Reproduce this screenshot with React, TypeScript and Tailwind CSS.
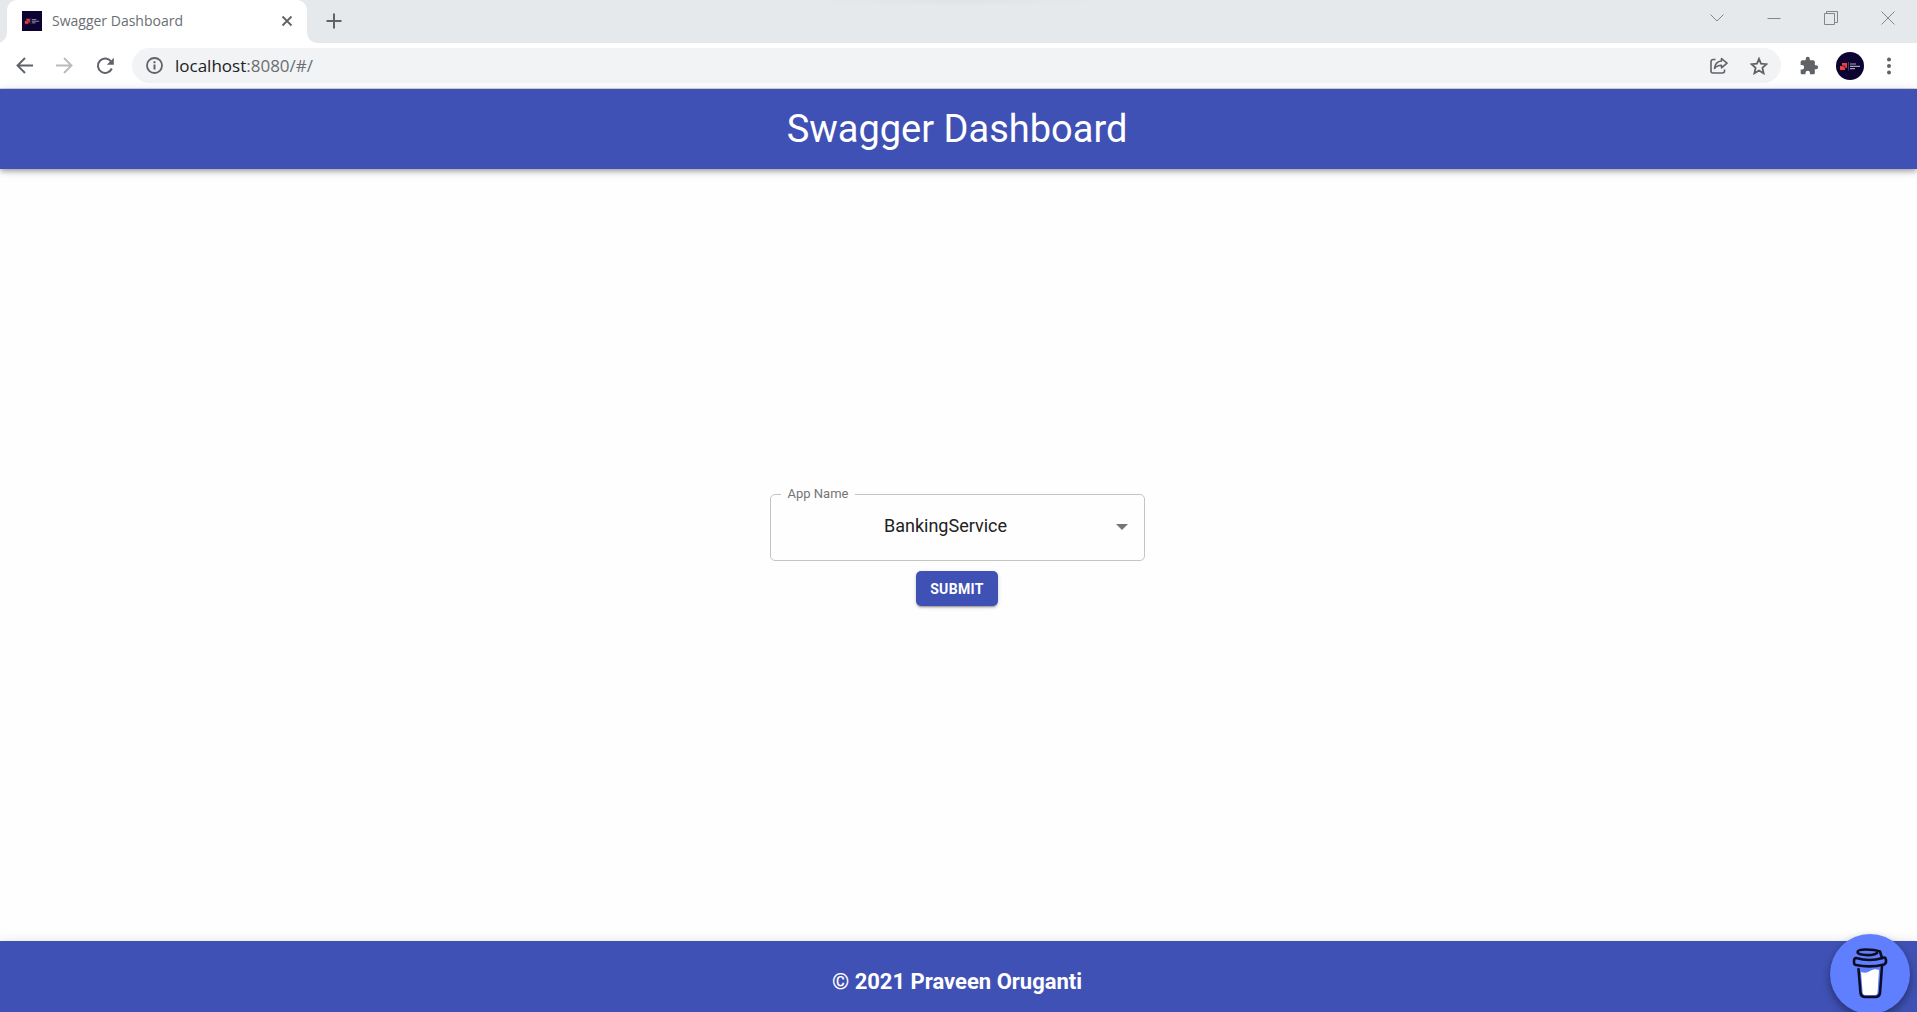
import { useState } from "react";
import type { ReactNode } from "react";

function IconButton({ label, className = "", children }: { label: string; className?: string; children: ReactNode }) {
  return (
    <button type="button" aria-label={label} className={`flex shrink-0 items-center justify-center ${className}`}>
      {children}
    </button>
  );
}

function BrandMark({ className }: { className: string }) {
  return (
    <svg viewBox="0 0 28 28" className={className} aria-hidden="true">
      <rect width="28" height="28" fill="#0c0333" />
      <path d="M6 11h5v5H9v2H4v-4h2z" fill="#e8413f" />
      <path d="M6 14h3v2" fill="none" stroke="#0c0333" strokeWidth=".6" />
      <path d="M12.500 10v8.500" stroke="#6b6685" strokeWidth=".6" />
      <path d="M14 12h6M14 14.300h10M14 16.600h5" stroke="#a5a2b8" strokeWidth="1.200" />
    </svg>
  );
}

function TabStrip() {
  return (
    <div className="flex h-[43px] bg-[#e5e9ec] bg-[radial-gradient(150px_6px_at_50%_0,#dfe3e6,transparent)]">
      <svg viewBox="0 0 7 10" className="h-2.5 w-[7px] shrink-0 self-end" aria-hidden="true">
        <path d="M7 0v10H0V9.500Q6 8 7 0z" fill="#fff" />
      </svg>
      <div className="flex w-[300px] shrink-0 items-center rounded-t-[10px] bg-white pb-0.5 pl-[15px] pr-3">
        <BrandMark className="h-5 w-5" />
        <span className="ml-2.5 flex-1 text-sm text-[#6a6e73]">Swagger Dashboard</span>
        <IconButton label="Close tab" className="h-4 w-4">
          <svg viewBox="0 0 16 16" className="h-4 w-4" aria-hidden="true">
            <path d="M3.500 3.500l9 9M12.500 3.500l-9 9" stroke="#5f6368" strokeWidth="1.800" />
          </svg>
        </IconButton>
      </div>
      <svg viewBox="0 0 10 10" className="h-2.5 w-2.5 shrink-0 self-end" aria-hidden="true">
        <path d="M0 0v10h10Q1 9 0 0z" fill="#fff" />
      </svg>
      <IconButton label="New tab" className="ml-[7px] h-[42px] w-5">
        <svg viewBox="0 0 16 16" className="h-4 w-4" aria-hidden="true">
          <path d="M8 .5v15M.5 8h15" stroke="#5f6368" strokeWidth="2" />
        </svg>
      </IconButton>
      <div className="ml-auto flex h-9 items-center pr-px text-[#83878b]">
        <IconButton label="Search tabs" className="w-[57px]">
          <svg viewBox="0 0 14 14" className="h-3.5 w-3.5" fill="none" stroke="currentColor" aria-hidden="true">
            <path d="M.5 3.500l6.500 6.500 6.500-6.500" />
          </svg>
        </IconButton>
        <IconButton label="Minimize" className="w-[57px]">
          <svg viewBox="0 0 14 14" className="h-3.5 w-3.5" fill="none" stroke="currentColor" aria-hidden="true">
            <path d="M.5 7.500h13" />
          </svg>
        </IconButton>
        <IconButton label="Restore" className="w-[57px]">
          <svg viewBox="0 0 14 14" className="h-3.5 w-3.5" fill="none" stroke="currentColor" aria-hidden="true">
            <path d="M.5 2.500h10v11h-10zM2.500 2.500v-2h11v11h-3" />
          </svg>
        </IconButton>
        <IconButton label="Close" className="w-[57px]">
          <svg viewBox="0 0 14 14" className="h-3.5 w-3.5" fill="none" stroke="currentColor" aria-hidden="true">
            <path d="M.5.5l13 13M13.500.5l-13 13" />
          </svg>
        </IconButton>
      </div>
    </div>
  );
}

function Toolbar() {
  return (
    <div className="flex h-[46px] items-center border-b border-[#d5d7d9] bg-white pl-4 pr-[26px] text-[#5f6368]">
      <IconButton label="Back" className="h-5 w-[17px]">
        <svg viewBox="0 0 17 17" className="h-[17px] w-[17px]" fill="none" stroke="currentColor" strokeWidth="1.900" aria-hidden="true">
          <path d="M17 8.500H1.500M9 1L1.500 8.500 9 16" />
        </svg>
      </IconButton>
      <IconButton label="Forward" className="ml-[23px] h-5 w-[17px] text-[#b9bbbe]">
        <svg viewBox="0 0 17 17" className="h-[17px] w-[17px]" fill="none" stroke="currentColor" strokeWidth="1.900" aria-hidden="true">
          <path d="M0 8.500h15.500M8 1l7.500 7.500L8 16" />
        </svg>
      </IconButton>
      <IconButton label="Reload" className="ml-[23px] h-5 w-[18px]">
        <svg viewBox="0 0 18 18" className="h-[18px] w-[18px]" fill="none" stroke="currentColor" strokeWidth="2" aria-hidden="true">
          <path d="M15 4.500A7.200 7.200 0 1 0 15.800 11.500" />
          <path d="M17.800.8v7h-7z" fill="currentColor" stroke="none" />
        </svg>
      </IconButton>
      <div className="ml-[18px] flex h-[35px] min-w-0 flex-1 items-center rounded-full bg-[#f1f3f4] pl-3.5 pr-[13px]">
        <IconButton label="View site information" className="h-5 w-[17px]">
          <svg viewBox="0 0 17 17" className="h-[17px] w-[17px]" fill="none" stroke="currentColor" aria-hidden="true">
            <circle cx="8.500" cy="8.500" r="7.500" strokeWidth="1.800" />
            <path d="M8.500 7.500v5M8.500 4.200v2" strokeWidth="2" />
          </svg>
        </IconButton>
        <a href="#/" className="ml-3 text-[17px] leading-6 text-[#6a6e73]">
          <span className="text-[#202124]">localhost</span>:8080/#/
        </a>
        <IconButton label="Share" className="ml-auto h-5 w-[18px]">
          <svg viewBox="0 0 18 18" className="h-[18px] w-[18px]" fill="none" stroke="currentColor" strokeWidth="1.600" strokeLinejoin="round" aria-hidden="true">
            <path d="M5.500 2.500H3a2 2 0 0 0-2 2V14a2 2 0 0 0 2 2h9.500a2 2 0 0 0 2-2v-1.500" />
            <path d="M11.500 1.500l5.500 4.700-5.500 4.600V8.300C8 8.300 6 9.500 4.500 11.500 5 7 8 4.300 11.500 4z" />
          </svg>
        </IconButton>
        <IconButton label="Bookmark this tab" className="ml-[22px] h-5 w-[18px]">
          <svg viewBox="0 0 18 18" className="h-[18px] w-[18px]" fill="none" stroke="currentColor" strokeWidth="1.800" aria-hidden="true">
            <path d="M9 1.800l2 4.900 5.500.5-4.100 3.600 1.200 5.500L9 13.500l-4.600 2.800 1.200-5.500L1.500 7.200l5.500-.5z" />
          </svg>
        </IconButton>
      </div>
      <IconButton label="Extensions" className="ml-[17px] h-[22px] w-[22px]">
        <svg viewBox="0 0 24 24" className="h-5 w-5" fill="currentColor" aria-hidden="true">
          <path d="M20.500 11H19V7c0-1.100-.9-2-2-2h-4V3.500a2.500 2.500 0 0 0-5 0V5H4c-1.100 0-2 .9-2 2v3.800h1.500a2.700 2.700 0 0 1 0 5.400H2V20c0 1.100.9 2 2 2h3.800v-1.500a2.700 2.700 0 0 1 5.400 0V22H17c1.100 0 2-.9 2-2v-4h1.500a2.500 2.500 0 0 0 0-5z" />
        </svg>
      </IconButton>
      <IconButton label="Profile" className="ml-4 h-7 w-7 overflow-hidden rounded-full">
        <BrandMark className="h-7 w-7" />
      </IconButton>
      <IconButton label="Menu" className="ml-[23px] h-5 w-1">
        <svg viewBox="0 0 4 18" className="h-[18px] w-1" fill="currentColor" aria-hidden="true">
          <circle cx="2" cy="2.500" r="2" />
          <circle cx="2" cy="9" r="2" />
          <circle cx="2" cy="15.500" r="2" />
        </svg>
      </IconButton>
    </div>
  );
}

function AppForm() {
  const [app, setApp] = useState("BankingService");
  return (
    <form className="flex w-[375px] flex-col items-center gap-2.5" onSubmit={(event) => event.preventDefault()}>
      <fieldset className="relative h-[75px] w-full rounded-[5px] border border-[#c4c4c4] px-2.5">
        <legend className="h-4 px-[7px] text-[13px] leading-4 text-[#757575]">
          <label htmlFor="app-name">App Name</label>
        </legend>
        <select
          id="app-name"
          value={app}
          onChange={(event) => setApp(event.target.value)}
          className="h-12 w-full appearance-none bg-transparent pr-[23px] text-center text-lg text-[#212121] outline-none"
        >
          <option>BankingService</option>
        </select>
        <svg viewBox="0 0 12 6" className="pointer-events-none absolute right-4 top-[22px] h-1.5 w-3" aria-hidden="true">
          <path d="M0 0h12L6 6z" fill="#757575" />
        </svg>
      </fieldset>
      <button
        type="submit"
        className="h-[35px] rounded-[5px] bg-[#3f51b5] px-3.5 text-sm font-bold tracking-wide text-white shadow-[0_3px_1px_-2px_rgba(0,0,0,0.2),0_2px_2px_0_rgba(0,0,0,0.14),0_1px_5px_0_rgba(0,0,0,0.12)]"
      >
        SUBMIT
      </button>
    </form>
  );
}

function CoffeeCup() {
  return (
    <svg viewBox="0 0 36 54" className="h-[54px] w-9" fill="none" stroke="#0d0c22" strokeWidth="2.600" strokeLinecap="round" strokeLinejoin="round" aria-hidden="true">
      <path d="M9 24Q14 26 18 23T27 22L25.500 45Q25 47 23 47H13Q11 47 10.700 45z" fill="#fff" stroke="none" />
      <path d="M6.500 21L8.500 45Q9 48.500 12.500 49H24Q27.500 48.500 28 45L30 18" />
      <path d="M4 10Q2 10 2 13.500T4 17Q18 20 32 16.500 34.500 15.500 34 12T30.500 10Q18 14 4 10z" />
      <path d="M25 5Q22 7.500 14 7 5.500 6.500 5.500 4T14 1.500 28 3.500L30 10" />
    </svg>
  );
}

export default function App() {
  return (
    <div className="flex h-screen flex-col overflow-hidden bg-[#fefefe] font-['Roboto',sans-serif]">
      <div className="shrink-0 font-['Open_Sans',sans-serif]">
        <TabStrip />
        <Toolbar />
      </div>
      <header className="z-10 flex h-20 shrink-0 items-center justify-center bg-[#3f51b5] pr-[3px] text-white shadow-[0_2px_4px_-1px_rgba(0,0,0,0.2),0_4px_5px_0_rgba(0,0,0,0.14),0_1px_10px_0_rgba(0,0,0,0.12)]">
        <h1 className="text-[38px] leading-[46px]">Swagger Dashboard</h1>
      </header>
      <main className="flex flex-1 items-center justify-center pb-[18px] pr-[3px]">
        <AppForm />
      </main>
      <footer className="flex h-[71px] shrink-0 items-center justify-center bg-[#3f51b5] pr-[3px] pt-2.5 text-white shadow-[0_2px_4px_-1px_rgba(0,0,0,0.2),0_4px_5px_0_rgba(0,0,0,0.14),0_1px_10px_0_rgba(0,0,0,0.12)]">
        <p className="text-[22px] font-bold leading-8">© 2021 Praveen Oruganti</p>
      </footer>
      <button
        type="button"
        aria-label="Buy me a coffee"
        className="fixed -bottom-0.5 right-[7px] z-20 flex h-20 w-20 items-center justify-center rounded-full bg-[#5f7fff] pt-0.5 shadow-[0_4px_8px_rgba(0,0,0,0.4)]"
      >
        <CoffeeCup />
      </button>
    </div>
  );
}
